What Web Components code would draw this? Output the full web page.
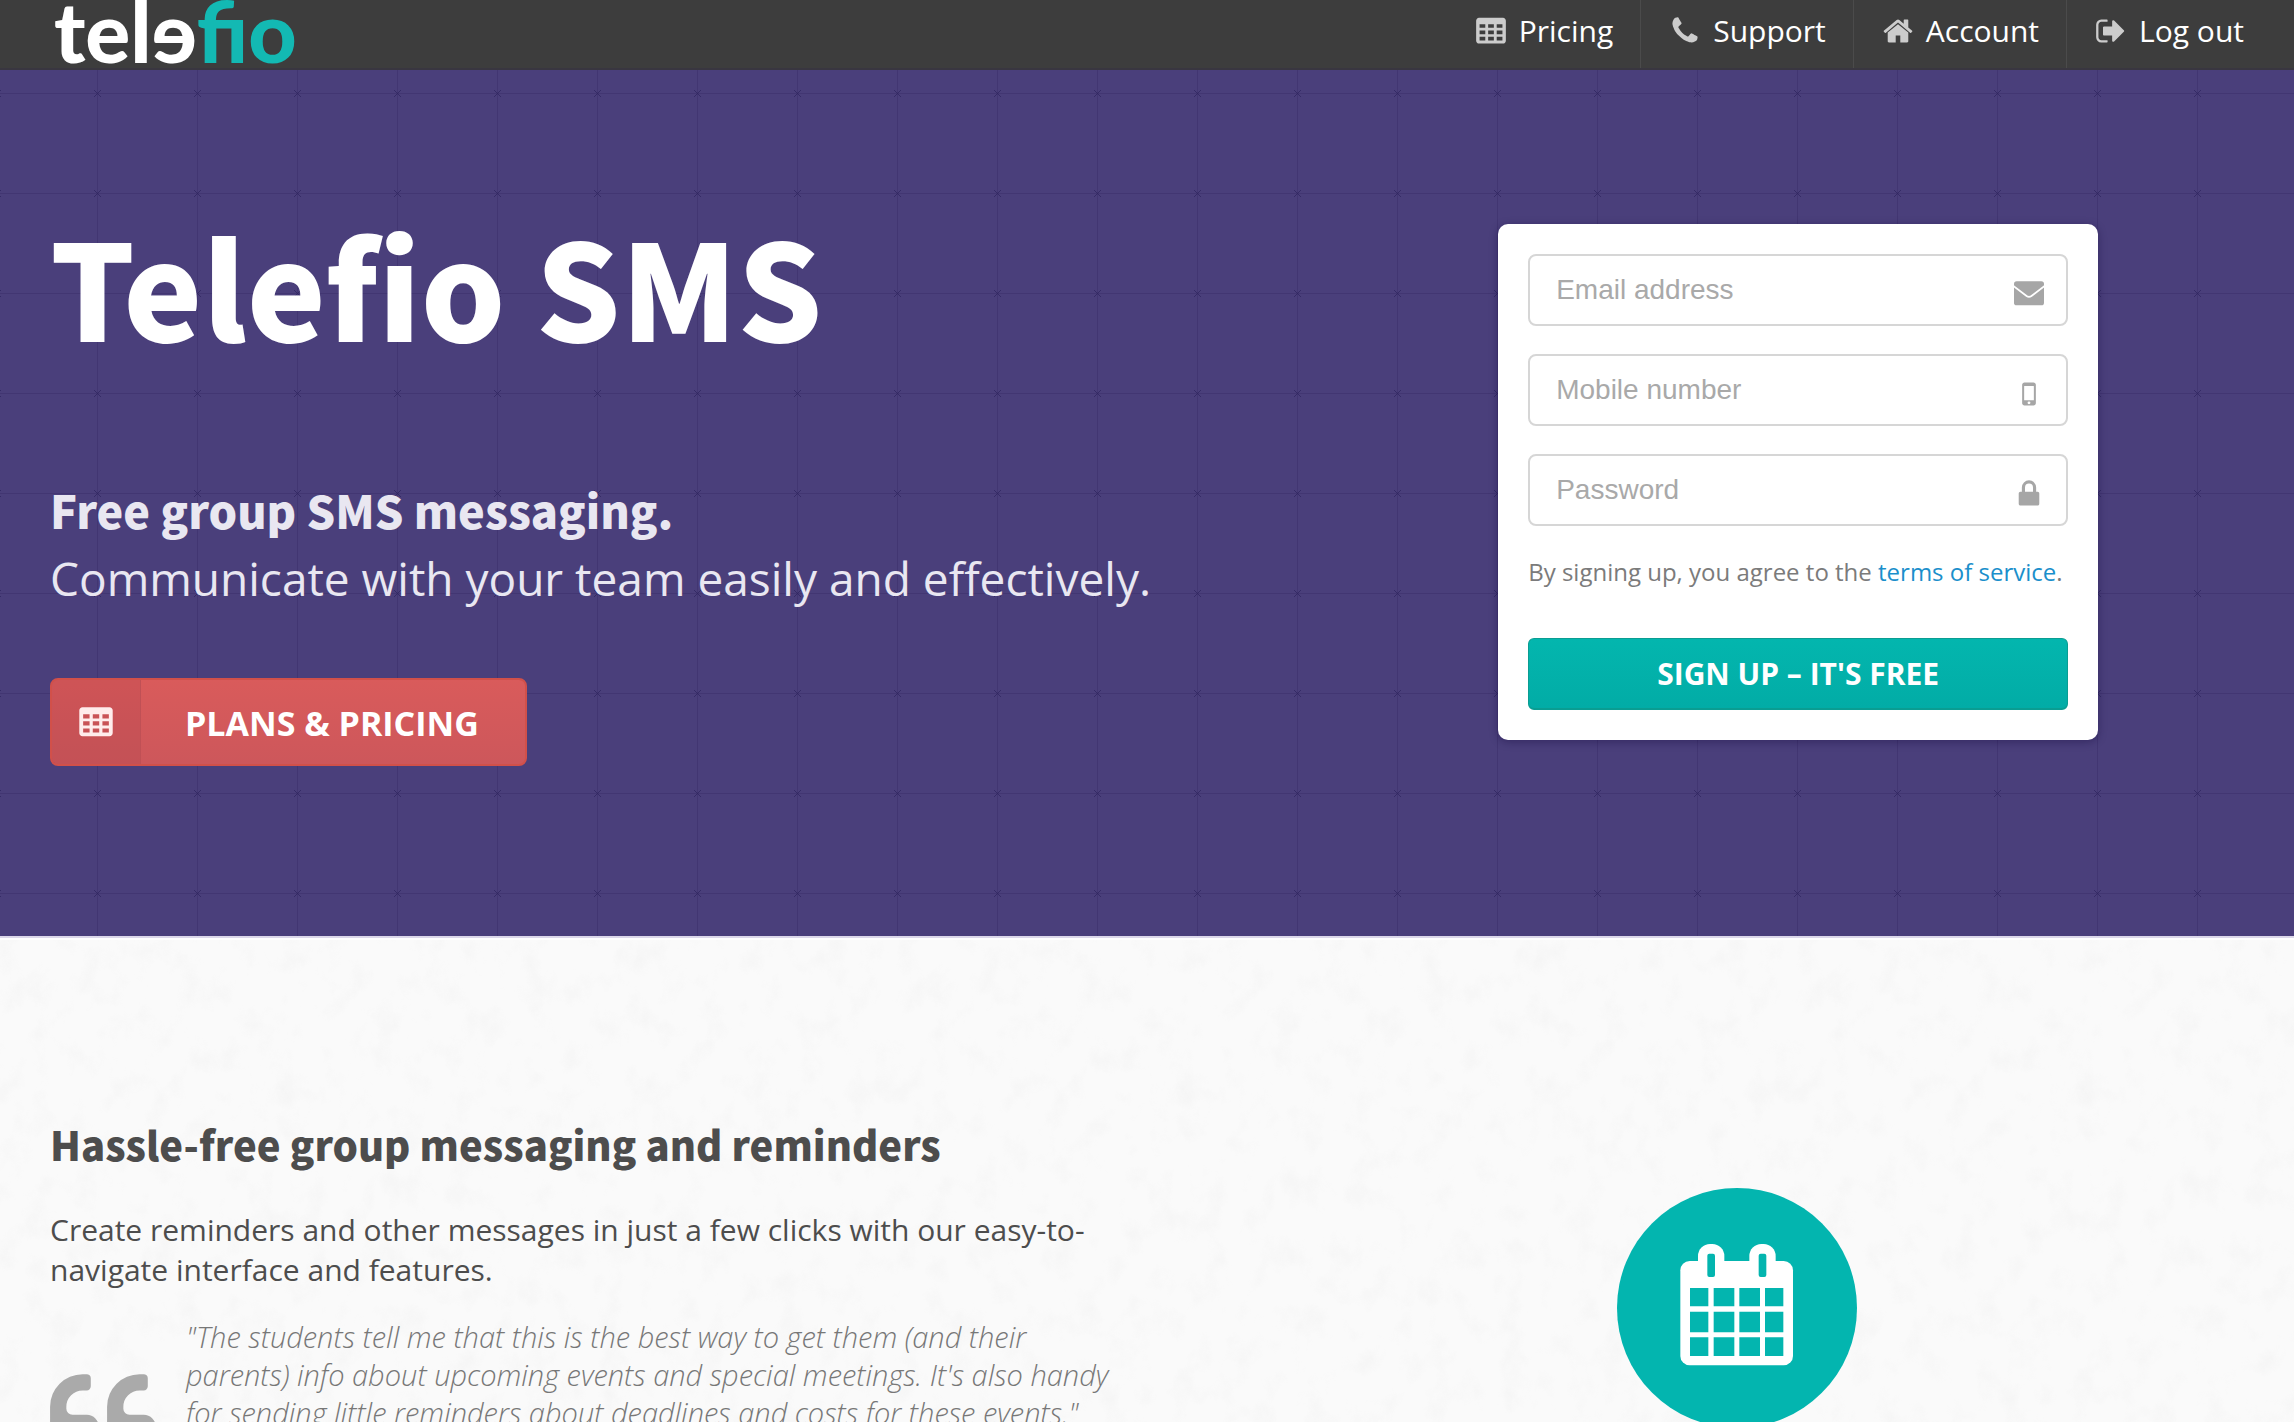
<!DOCTYPE html>
<html lang="en">
<head>
<meta charset="utf-8">
<meta name="viewport" content="width=device-width, initial-scale=1">
<title>Telefio SMS</title>
<style>
html {
  background: #fafafa;
  scrollbar-width: none;
}

body {
  margin: 0;
  font-family: "Open Sans", sans-serif;
  color: #4d4d4d;
  --heading-font: "Noto Sans CJK JP", "Open Sans", sans-serif;
  --gutter: 50px;
  --teal: #03b5af;
  --purple: #4a3f7b;
}
</style>
</head>
<body>
<telefio-header>
  <nav-link href="#pricing" icon="table">Pricing</nav-link>
  <nav-link href="#support" icon="phone">Support</nav-link>
  <nav-link href="#account" icon="home">Account</nav-link>
  <nav-link href="#logout" icon="signout">Log out</nav-link>
</telefio-header>
<main>
  <hero-banner>
    <span slot="title">Telefio SMS</span>
    <span slot="lead">Free group SMS messaging.</span>
    <span slot="text">Communicate with your team easily and effectively.</span>
    <action-button slot="action" icon="table">PLANS &amp; PRICING</action-button>
    <signup-card slot="aside"></signup-card>
  </hero-banner>
  <feature-row>
    <span slot="title">Hassle-free group messaging and reminders</span>
    <span slot="text">Create reminders and other messages in just a few clicks with our easy-to-navigate interface and features.</span>
    <pull-quote slot="quote">"The students tell me that this is the best way to get them (and their parents) info about upcoming events and special meetings. It's also handy for sending little reminders about deadlines and costs for these events."</pull-quote>
    <calendar-badge slot="aside"></calendar-badge>
  </feature-row>
</main>

<script>
const icons = {
  table: `<path fill-rule="evenodd" d="M224 160h1344q66 0 113 47t47 113v1120q0 66-47 113t-113 47h-1344q-66 0-113-47t-47-113v-1120q0-66 47-113t113-47z
    M256 512v208h320v-208z M736 512v208h320v-208z M1216 512v208h320v-208z
    M256 864v208h320v-208z M736 864v208h320v-208z M1216 864v208h320v-208z
    M256 1216v208h320v-208z M736 1216v208h320v-208z M1216 1216v208h320v-208z"/>`,
  phone: `<path d="M1600 1240q0 27-10 70.500t-21 68.500q-21 50-122 106-94 51-186 51-27 0-53-3.500t-57.500-12.500-47-14.500-55.500-20.500-49-18q-98-35-175-83-127-79-264-216t-216-264q-48-77-83-175-3-9-18-49t-20.500-55.500-14.500-47-12.500-57.500-3.500-53q0-92 51-186 56-101 106-122 25-11 68.500-21t70.500-10q14 0 21 3 18 6 53 76 11 19 30 54t35 63.500 31 53.500q3 4 17.500 25t21.500 35.500 7 28.500q0 20-28.500 50t-62 55-62 53-28.500 46q0 9 5 22.500t8.500 20.500 14 24 11.500 19q76 137 174 235t235 174q2 1 19 11.500t24 14 20.500 8.500 22.500 5q18 0 46-28.500t53-62 55-62 50-28.500q14 0 28.500 7t35.500 21.500 25 17.500q25 15 53.500 31t63.500 35 54 30q70 35 76 53 3 7 3 21z"/>`,
  home: `<path d="M1472 992v480q0 26-19 45t-45 19h-384v-384h-256v384h-384q-26 0-45-19t-19-45v-480q0-1 .5-3t.5-3l575-474 575 474q1 2 1 6zm223-69l-62 74q-8 9-21 11h-3q-13 0-21-7l-692-577-692 577q-12 8-24 7-13-2-21-11l-62-74q-8-10-7-23.500t11-21.500l719-599q32-26 76-26t76 26l244 204v-195q0-14 9-23t23-9h192q14 0 23 9t9 23v408l219 182q10 8 11 21.500t-7 23.500z"/>`,
  signout: `<path d="M704 1440q0 4 1 20t.5 26.500-3 23.500-10 19.500-20.500 6.500h-320q-119 0-203.500-84.500t-84.500-203.500v-704q0-119 84.500-203.500t203.500-84.500h320q13 0 22.500 9.500t9.500 22.500q0 4 1 20t.5 26.500-3 23.500-10 19.500-20.500 6.500h-320q-66 0-113 47t-47 113v704q0 66 47 113t113 47h312l11.500 1 11.500 3 8 5.500 7 9 2 13.500zm928-544q0 26-19 45l-544 544q-19 19-45 19t-45-19-19-45v-288h-448q-26 0-45-19t-19-45v-384q0-26 19-45t45-19h448v-288q0-26 19-45t45-19 45 19l544 544q19 19 19 45z"/>`,
  envelope: `<rect x="56" y="180" width="1680" height="1350" rx="150"/>
    <path d="M20 440L760 1010Q896 1110 1032 1010L1772 440" fill="none" stroke="#fff" stroke-width="100"/>`,
  mobile: `<path fill-rule="evenodd" d="M640 256h512q52 0 90 38t38 90v1024q0 52-38 90t-90 38h-512q-52 0-90-38t-38-90v-1024q0-52 38-90t90-38z
    M640 448q-16 0-16 16v768q0 16 16 16h512q16 0 16-16v-768q0-16-16-16z
    M896 1312a80 80 0 1 0 0 160a80 80 0 1 0 0-160z"/>`,
  lock: `<path fill-rule="evenodd" d="M496 768V530a400 400 0 0 1 800 0v238h80q40 0 68 28t28 68v576q0 40-28 68t-68 28h-960q-40 0-68-28t-28-68v-576q0-40 28-68t68-28z
    M672 768h448V530a224 224 0 0 0-448 0z"/>`,
  quote: `<path d="M832 960v384q0 80-56 136t-136 56h-384q-80 0-136-56t-56-136v-704q0-104 40.500-198.500t109.500-163.500 163.500-109.500 198.500-40.500h64q26 0 45 19t19 45v128q0 26-19 45t-45 19h-64q-106 0-181 75t-75 181v32q0 40 28 68t68 28h224q80 0 136 56t56 136zm896 0v384q0 80-56 136t-136 56h-384q-80 0-136-56t-56-136v-704q0-104 40.500-198.500t109.500-163.500 163.500-109.500 198.500-40.500h64q26 0 45 19t19 45v128q0 26-19 45t-45 19h-64q-106 0-181 75t-75 181v32q0 40 28 68t68 28h224q80 0 136 56t56 136z"/>`,
};

/**
 * Renders markup into an open shadow root.
 */
const render = (element, html) => {
  element.attachShadow({mode: 'open'}).innerHTML = html;
};

/**
 * Single glyph from the icon set, sized by its host box.
 */
class TelefioIcon extends HTMLElement {
  connectedCallback() {
    if (this.shadowRoot) return;
    render(this, `
<style>
:host {
  display: block;
  flex: none;
  width: 32px;
  height: 32px;
}

svg {
  display: block;
  width: 100%;
  height: 100%;
  fill: currentColor;
}
</style>
<svg viewBox="0 0 1792 1792" aria-hidden="true">${icons[this.getAttribute('name')]}</svg>
`);
  }
}

/**
 * Link in the top bar.
 */
class NavLink extends HTMLElement {
  connectedCallback() {
    if (this.shadowRoot) return;
    render(this, `
<style>
:host {
  display: block;
  border-left: 1px solid #4b4b4b;
}

:host(:first-child) {
  border-left: 0;
}

:host(:last-child) a {
  padding-right: 0;
}

a {
  display: flex;
  align-items: center;
  gap: 12px;
  padding: 0 27px 6px 28px;
  color: #fff;
  font-size: 30px;
  line-height: 62px;
  text-decoration: none;
}

telefio-icon {
  color: #ccc;
}
</style>
<a href="${this.getAttribute('href')}">
  <telefio-icon name="${this.getAttribute('icon')}"></telefio-icon>
  <slot></slot>
</a>
`);
  }
}

/**
 * Dark top bar with the logo and the main navigation.
 */
class TelefioHeader extends HTMLElement {
  constructor() {
    super();
    render(this, `
<style>
:host {
  display: block;
}

header {
  display: flex;
  justify-content: space-between;
  height: 70px;
  box-sizing: border-box;
  padding: 0 var(--gutter);
  border-bottom: 2px solid #393640;
  background: #3d3d3d;
}

nav {
  display: flex;
}

.logo {
  padding-left: 4px;
  color: #fff;
  font-family: Lato, sans-serif;
  font-size: 84px;
  font-weight: 900;
  line-height: 62px;
  text-decoration: none;
}

.logo-accent {
  color: #13b9b3;
}
</style>
<header>
  <a class="logo" href="#home" aria-label="telefio">telɘ<span class="logo-accent">fio</span></a>
  <nav><slot></slot></nav>
</header>
`);
  }
}

/**
 * Red call to action with an icon panel on its left.
 */
class ActionButton extends HTMLElement {
  connectedCallback() {
    if (this.shadowRoot) return;
    render(this, `
<style>
:host {
  display: block;
}

button {
  display: flex;
  align-items: stretch;
  height: 88px;
  padding: 0;
  border: 2px solid #d1504a;
  border-radius: 8px;
  overflow: hidden;
  background: linear-gradient(#d95b5b, #cd575b);
  color: #fff;
  font: 700 34px/86px "Open Sans", sans-serif;
  cursor: pointer;
}

.icon {
  display: flex;
  align-items: center;
  padding: 0 26px;
  border-right: 1px solid #c05055;
  background: rgba(120, 30, 50, 0.1);
}

.icon telefio-icon {
  width: 36px;
  height: 36px;
  color: #ffecec;
}

.label {
  padding: 0 46px 0 44px;
}
</style>
<button type="button">
  <span class="icon"><telefio-icon name="${this.getAttribute('icon')}"></telefio-icon></span>
  <span class="label"><slot></slot></span>
</button>
`);
  }
}

/**
 * Text box with an icon on its right.
 */
class IconField extends HTMLElement {
  connectedCallback() {
    if (this.shadowRoot) return;
    const label = this.getAttribute('label');
    render(this, `
<style>
:host {
  display: block;
}

.field {
  display: flex;
  align-items: center;
  height: 72px;
  box-sizing: border-box;
  padding: 0 21px 0 26px;
  border: 2px solid #d6d6d6;
  border-radius: 8px;
  background: #fff;
}

input {
  flex: 1;
  min-width: 0;
  padding: 0;
  border: 0;
  outline: 0;
  background: none;
  color: #4d4d4d;
  font: 28px/40px "Liberation Sans", sans-serif;
}

input::placeholder {
  color: #a9a9a9;
  opacity: 1;
}

telefio-icon {
  margin-top: 8px;
  color: #a6a6a6;
}
</style>
<div class="field">
  <input type="${this.getAttribute('type')}" aria-label="${label}" placeholder="${label}">
  <telefio-icon name="${this.getAttribute('icon')}"></telefio-icon>
</div>
`);
  }
}

/**
 * White card with the sign-up form.
 */
class SignupCard extends HTMLElement {
  constructor() {
    super();
    render(this, `
<style>
:host {
  display: block;
  width: 600px;
  max-width: 100%;
}

form {
  display: flex;
  flex-direction: column;
  gap: 28px;
  padding: 30px;
  border-radius: 10px;
  background: #fff;
  box-shadow: 0 2px 8px rgba(20, 10, 60, 0.4);
}

p {
  margin: 0;
  color: #7b7b7b;
  font-size: 24px;
  line-height: 36px;
  white-space: nowrap;
}

p a {
  color: #1b8fcb;
  text-decoration: none;
}

button {
  height: 72px;
  margin-top: 20px;
  border: 1px solid #0a9d92;
  border-bottom-width: 2px;
  border-radius: 6px;
  background: linear-gradient(#03b6ae, #02aca6);
  color: #fff;
  font: 700 30px/40px "Open Sans", sans-serif;
  cursor: pointer;
}
</style>
<form>
  <icon-field type="email" label="Email address" icon="envelope"></icon-field>
  <icon-field type="tel" label="Mobile number" icon="mobile"></icon-field>
  <icon-field type="password" label="Password" icon="lock"></icon-field>
  <p>By signing up, you agree to the <a href="#terms">terms of service</a>.</p>
  <button type="button">SIGN UP – IT'S FREE</button>
</form>
`);
  }
}

/**
 * Purple banner with a stitched grid behind the pitch.
 */
class HeroBanner extends HTMLElement {
  constructor() {
    super();
    render(this, `
<style>
:host {
  display: block;
}

section {
  display: grid;
  grid-template-columns: 7fr 5fr;
  column-gap: 54px;
  padding: 144px var(--gutter) 170px;
  border-bottom: 2px solid #dcd8ea;
  background-color: var(--purple);
  background-image: url("data:image/svg+xml,%3Csvg xmlns='http://www.w3.org/2000/svg' width='100' height='100' fill='none' stroke='%23302560'%3E%3Cpath d='M0 23.500H100M97.500 0V100' stroke-width='1' opacity='.33'/%3E%3Cpath d='M94 20l7 7M94 27l7-7M-6 20l7 7M-6 27l7-7' stroke-width='1' opacity='.8'/%3E%3C/svg%3E");
}

h1 {
  margin: 0;
  color: #fff;
  font-family: var(--heading-font);
  font-size: 133px;
  font-weight: 900;
  line-height: 140px;
}

.lead,
.text {
  margin: 0;
  color: #e9e7f1;
  font-size: 46px;
  line-height: 68px;
}

.lead {
  margin-top: 122px;
  font-family: var(--heading-font);
  font-size: 45px;
  font-weight: 900;
}

.action {
  margin-top: 66px;
}

.aside {
  display: flex;
  justify-content: center;
  align-items: flex-start;
  padding-top: 10px;
}
</style>
<section>
  <div>
    <h1><slot name="title"></slot></h1>
    <p class="lead"><slot name="lead"></slot></p>
    <p class="text"><slot name="text"></slot></p>
    <div class="action"><slot name="action"></slot></div>
  </div>
  <div class="aside"><slot name="aside"></slot></div>
</section>
`);
  }
}

/**
 * Customer quote with a large quotation mark.
 */
class PullQuote extends HTMLElement {
  constructor() {
    super();
    render(this, `
<style>
:host {
  display: block;
}

blockquote {
  display: flex;
  align-items: flex-start;
  gap: 26px;
  margin: 0;
  padding-right: 20px;
  color: #777;
  font-size: 29px;
  font-style: italic;
  font-weight: 300;
  line-height: 38px;
}

telefio-icon {
  width: 114px;
  height: 114px;
  margin-left: -4px;
  margin-top: 48px;
  color: #aaa;
}
</style>
<blockquote>
  <telefio-icon name="quote"></telefio-icon>
  <div><slot></slot></div>
</blockquote>
`);
  }
}

/**
 * Teal disc with a calendar.
 */
class CalendarBadge extends HTMLElement {
  constructor() {
    super();
    render(this, `
<style>
:host {
  display: block;
}

svg {
  display: block;
  width: 240px;
  height: 240px;
}
</style>
<svg viewBox="114 84 720 720" role="img" aria-label="Calendar">
  <circle cx="474" cy="444" r="360" fill="#03b5af"/>
  <g fill="#fff">
    <rect x="304" y="303" width="338" height="313" rx="28"/>
    <rect x="357" y="252" width="79" height="110" rx="36"/>
    <rect x="511" y="252" width="79" height="110" rx="36"/>
  </g>
  <g fill="#03b5af">
    <rect x="385" y="281" width="23" height="70" rx="6"/>
    <rect x="539" y="281" width="23" height="70" rx="6"/>
    <path d="M333 384h55v55h-55zM404 384h62v55h-62zM481 384h62v55h-62zM558 384h55v55h-55z
      M333 455h55v62h-55zM404 455h62v62h-62zM481 455h62v62h-62zM558 455h55v62h-55z
      M333 532h55v56h-55zM404 532h62v56h-62zM481 532h62v56h-62zM558 532h55v56h-55z"/>
  </g>
</svg>
`);
  }
}

/**
 * Feature text on the left, picture on the right, on a paper ground.
 */
class FeatureRow extends HTMLElement {
  constructor() {
    super();
    render(this, `
<style>
:host {
  display: block;
}

section {
  display: grid;
  grid-template-columns: 14fr 13fr;
  column-gap: 90px;
  padding: 174px var(--gutter) 0;
  border-top: 2px solid #fff;
  background-color: #fafafa;
  background-image: url("data:image/svg+xml,%3Csvg xmlns='http://www.w3.org/2000/svg' width='900' height='900'%3E%3Cfilter id='p' x='0' y='0' width='100%25' height='100%25'%3E%3CfeTurbulence type='fractalNoise' baseFrequency='.04 .03' numOctaves='6' seed='11' stitchTiles='stitch'/%3E%3CfeColorMatrix values='0 0 0 0 .5 0 0 0 0 .5 0 0 0 0 .5 1.200 0 0 0 -.6'/%3E%3C/filter%3E%3Crect width='900' height='900' filter='url(%23p)' opacity='.13'/%3E%3C/svg%3E");
}

h2 {
  margin: 0;
  font-family: var(--heading-font);
  font-size: 40px;
  font-weight: 900;
  line-height: 60px;
}

.text {
  margin: 36px 0 0;
  font-size: 30px;
  line-height: 40px;
}

.quote {
  margin-top: 28px;
}

.aside {
  display: flex;
  justify-content: center;
  align-items: flex-start;
  padding-top: 74px;
}
</style>
<section>
  <div>
    <h2><slot name="title"></slot></h2>
    <p class="text"><slot name="text"></slot></p>
    <div class="quote"><slot name="quote"></slot></div>
  </div>
  <div class="aside"><slot name="aside"></slot></div>
</section>
`);
  }
}

window.customElements.define('telefio-icon', TelefioIcon);
window.customElements.define('nav-link', NavLink);
window.customElements.define('telefio-header', TelefioHeader);
window.customElements.define('action-button', ActionButton);
window.customElements.define('icon-field', IconField);
window.customElements.define('signup-card', SignupCard);
window.customElements.define('hero-banner', HeroBanner);
window.customElements.define('pull-quote', PullQuote);
window.customElements.define('calendar-badge', CalendarBadge);
window.customElements.define('feature-row', FeatureRow);
</script>
</body>
</html>
